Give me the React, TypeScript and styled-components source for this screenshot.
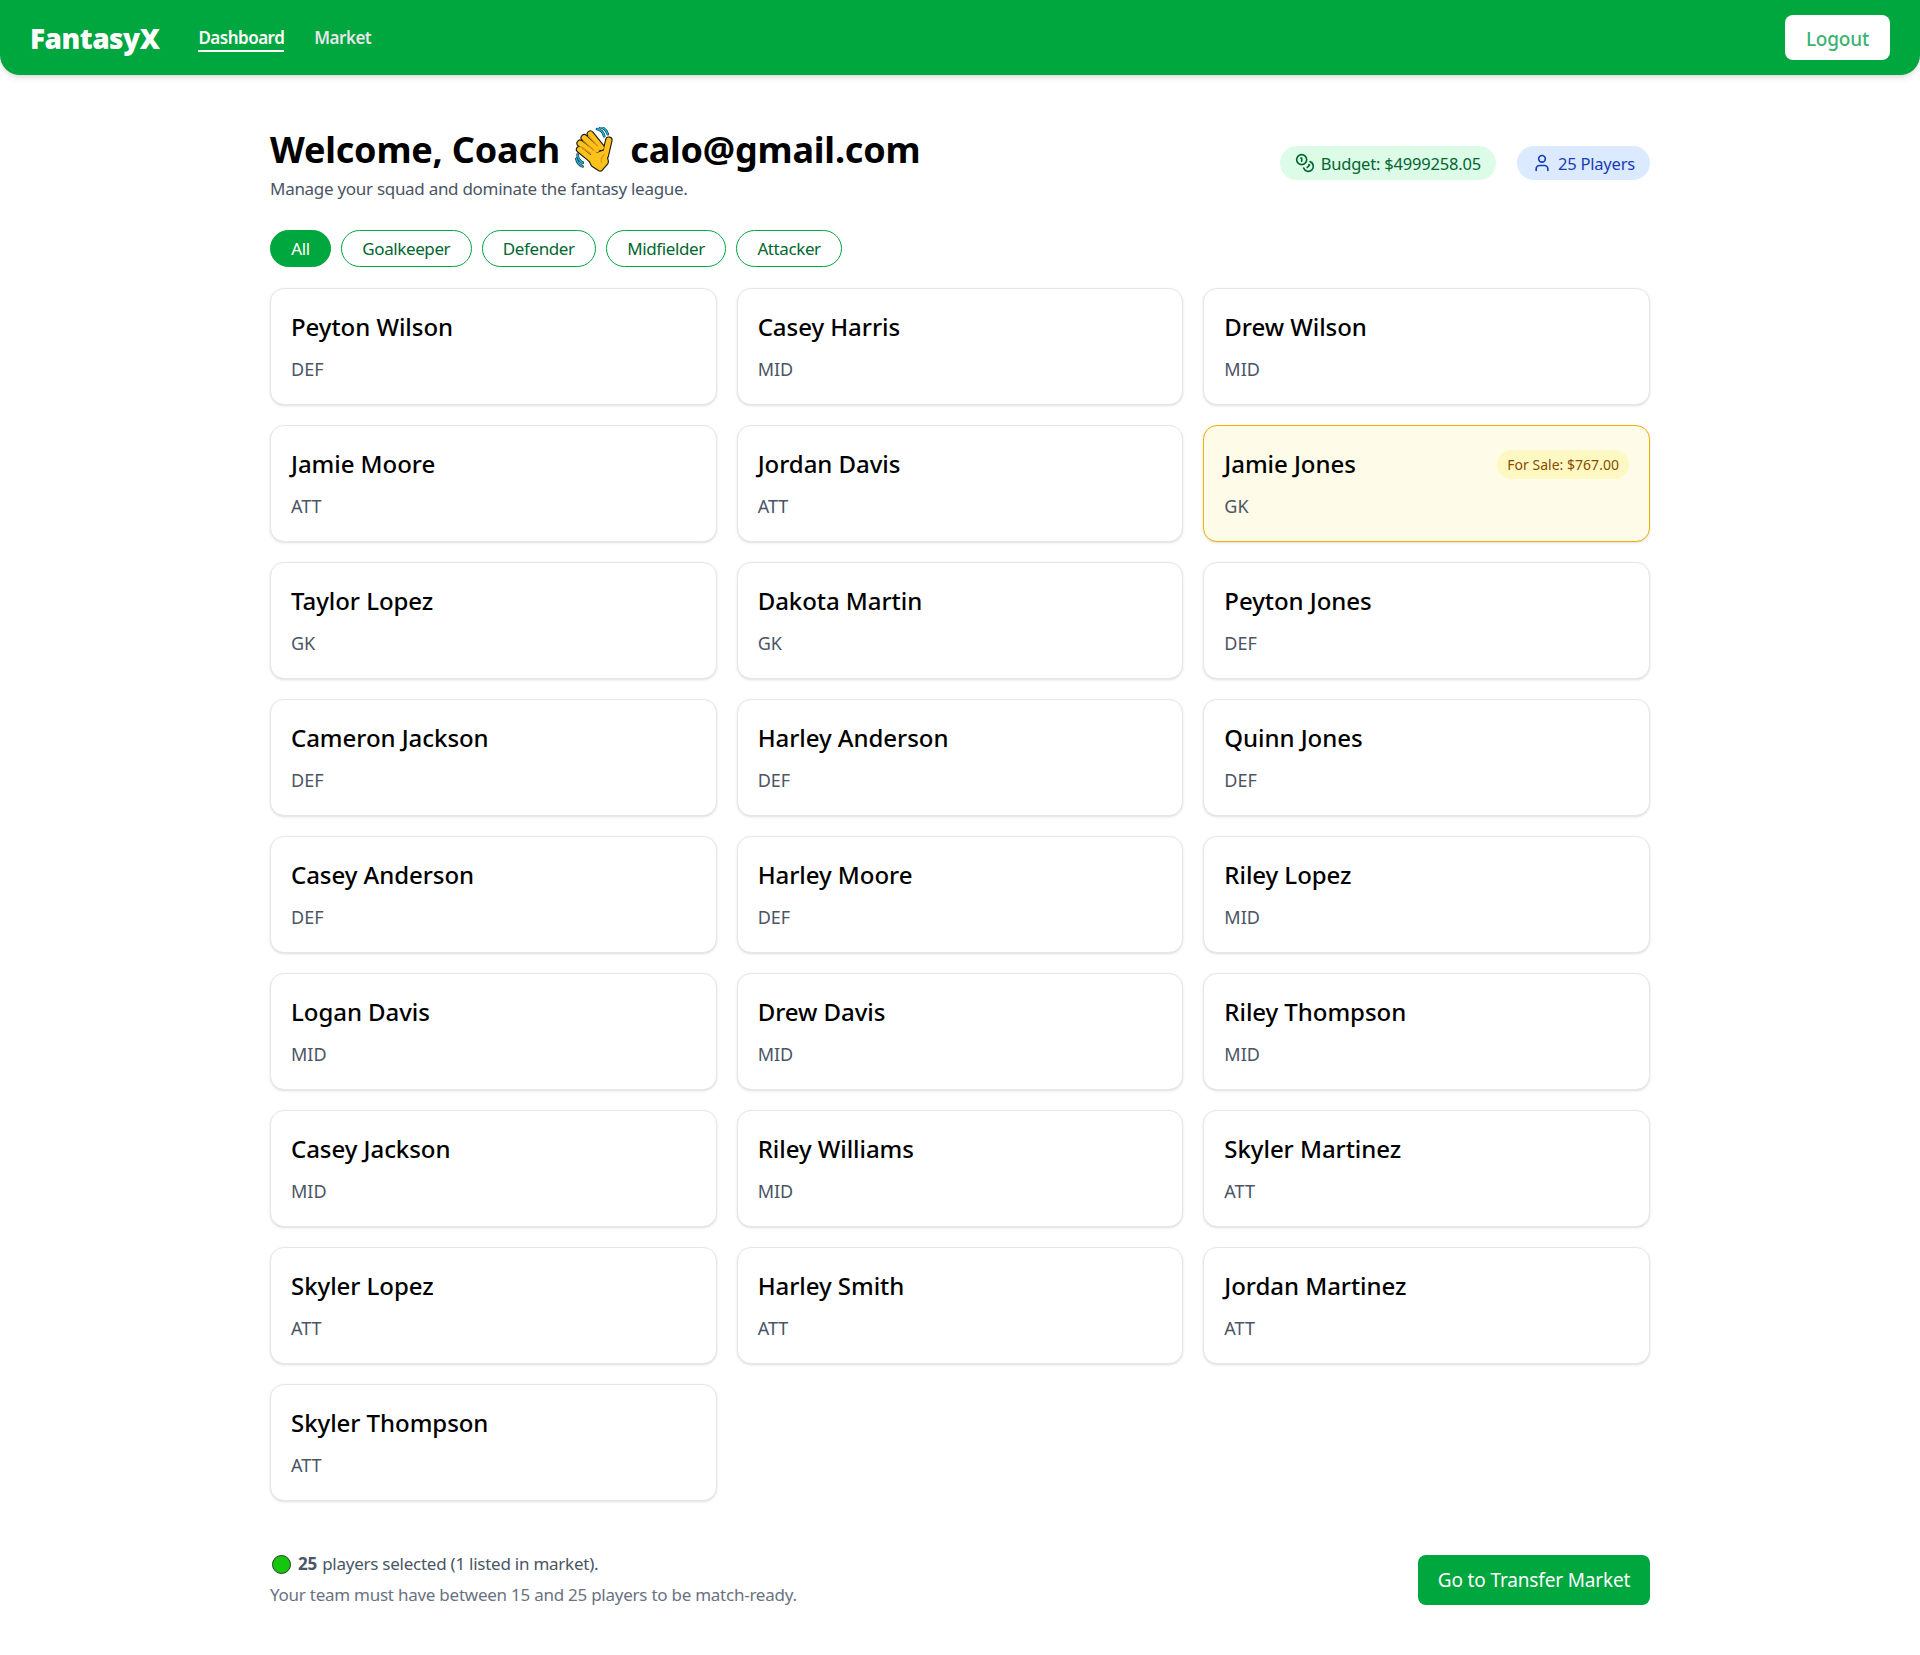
import React from "react";
import styled, { createGlobalStyle } from "styled-components";
import { Coins, User } from "lucide-react";

const FONT = `"Noto Sans", "Open Sans", sans-serif`;

const GlobalStyle = createGlobalStyle`
  * { box-sizing: border-box; }
  body {
    margin: 0;
    background: #fff;
    font-family: ${FONT};
    color: #000;
  }
`;

const players: { name: string; pos: string; price?: string }[] = [
  { name: "Peyton Wilson", pos: "DEF" },
  { name: "Casey Harris", pos: "MID" },
  { name: "Drew Wilson", pos: "MID" },
  { name: "Jamie Moore", pos: "ATT" },
  { name: "Jordan Davis", pos: "ATT" },
  { name: "Jamie Jones", pos: "GK", price: "$767.00" },
  { name: "Taylor Lopez", pos: "GK" },
  { name: "Dakota Martin", pos: "GK" },
  { name: "Peyton Jones", pos: "DEF" },
  { name: "Cameron Jackson", pos: "DEF" },
  { name: "Harley Anderson", pos: "DEF" },
  { name: "Quinn Jones", pos: "DEF" },
  { name: "Casey Anderson", pos: "DEF" },
  { name: "Harley Moore", pos: "DEF" },
  { name: "Riley Lopez", pos: "MID" },
  { name: "Logan Davis", pos: "MID" },
  { name: "Drew Davis", pos: "MID" },
  { name: "Riley Thompson", pos: "MID" },
  { name: "Casey Jackson", pos: "MID" },
  { name: "Riley Williams", pos: "MID" },
  { name: "Skyler Martinez", pos: "ATT" },
  { name: "Skyler Lopez", pos: "ATT" },
  { name: "Harley Smith", pos: "ATT" },
  { name: "Jordan Martinez", pos: "ATT" },
  { name: "Skyler Thompson", pos: "ATT" },
];

const filters = ["All", "Goalkeeper", "Defender", "Midfielder", "Attacker"];

// hand is built from round strokes: dark pass first, yellow pass on top
const HAND = (
  <>
    <path d="M4 22 L15 31" />
    <path d="M4.500 16 L18 26" />
    <path d="M8.500 10.500 L21 22" />
    <path d="M14.500 7 L25 20" />
    <path d="M32.500 13 L29 28" />
    <path d="M15 30 L27 26 L29 34 L24 40 L18 36 Z" />
  </>
);

const WaveEmoji = () => (
  <svg width="40" height="46" viewBox="0 0 38 45" fill="none" strokeLinecap="round" strokeLinejoin="round">
    <path d="M21 2c3 .500 6 3 7 7M24 0c3 .500 6 3 7.500 7" stroke="#12333d" strokeWidth="2.600" />
    <path d="M21 2c3 .500 6 3 7 7M24 0c3 .500 6 3 7.500 7" stroke="#19b5d6" strokeWidth="1.400" />
    <path d="M2 27c0 3 1.500 6 5 8M0.800 31c.500 3 2.500 6 6 7.500" stroke="#12333d" strokeWidth="2.600" />
    <path d="M2 27c0 3 1.500 6 5 8M0.800 31c.500 3 2.500 6 6 7.500" stroke="#19b5d6" strokeWidth="1.400" />
    <g stroke="#1d1a12" strokeWidth="7.400">{HAND}</g>
    <g stroke="#fcc21b" strokeWidth="5.200" fill="#fcc21b">{HAND}</g>
    <path d="M6 19.500 L15 26M7.500 13.500 L17.500 22.500M12.500 9 L21.500 18.500" stroke="#d48c0e" strokeWidth="1" />
    <path d="M28 27c-2.500 2-3.500 4.500-2.800 7.500" stroke="#d48c0e" strokeWidth="1" />
  </svg>
);

const Nav = () => (
  <NavBar>
    <NavLeft>
      <Logo>FantasyX</Logo>
      <NavLink $active>Dashboard</NavLink>
      <NavLink>Market</NavLink>
    </NavLeft>
    <LogoutButton>Logout</LogoutButton>
  </NavBar>
);

const PlayerCard = ({ name, pos, price }: { name: string; pos: string; price?: string }) => (
  <Card $sale={!!price}>
    <CardTop>
      <PlayerName>{name}</PlayerName>
      {price && <SaleTag>For Sale: {price}</SaleTag>}
    </CardTop>
    <Position>{pos}</Position>
  </Card>
);

export default function App() {
  return (
    <>
      <GlobalStyle />
      <Nav />
      <Main>
        <Head>
          <div>
            <Title>
              Welcome, Coach <EmojiWrap><WaveEmoji /></EmojiWrap> calo@gmail.com
            </Title>
            <Subtitle>Manage your squad and dominate the fantasy league.</Subtitle>
          </div>
          <Badges>
            <Badge $tone="green">
              <Coins size={20} strokeWidth={2} />
              Budget: $4999258.05
            </Badge>
            <Badge $tone="blue">
              <User size={20} strokeWidth={2} />
              25 Players
            </Badge>
          </Badges>
        </Head>
        <Filters>
          {filters.map((f, i) => (
            <FilterPill key={f} $active={i === 0}>{f}</FilterPill>
          ))}
        </Filters>
        <Grid>
          {players.map((p) => (
            <PlayerCard key={p.name} {...p} />
          ))}
        </Grid>
        <Footer>
          <div>
            <Count>
              <Dot />
              <strong>25</strong> players selected (1 listed in market).
            </Count>
            <Hint>Your team must have between 15 and 25 players to be match-ready.</Hint>
          </div>
          <MarketButton>Go to Transfer Market</MarketButton>
        </Footer>
      </Main>
    </>
  );
}

const NavBar = styled.header`
  height: 75px;
  background: #00a63e;
  border-radius: 0 0 20px 20px;
  padding: 0 30px;
  display: flex;
  align-items: center;
  justify-content: space-between;
  box-shadow: 0 4px 6px -1px rgba(0, 0, 0, 0.1), 0 2px 4px -2px rgba(0, 0, 0, 0.1);
`;

const NavLeft = styled.div`
  display: flex;
  align-items: center;
  gap: 30px;
`;

const Logo = styled.div`
  color: #fff;
  font-size: 28px;
  font-weight: 900;
  letter-spacing: -0.5px;
  margin-right: 9px;
`;

const NavLink = styled.a<{ $active?: boolean }>`
  color: ${(p) => (p.$active ? "#fff" : "#e5e7eb")};
  font-size: 17px;
  font-weight: 600;
  letter-spacing: -0.5px;
  line-height: 24px;
  padding-top: 2px;
  border-bottom: 2px solid ${(p) => (p.$active ? "#fff" : "transparent")};
`;

const LogoutButton = styled.button`
  width: 105px;
  height: 45px;
  border: 0;
  border-radius: 8px;
  padding: 2px 0 0;
  background: #fff;
  color: #3cb371;
  font-family: ${FONT};
  font-size: 19px;
  font-weight: 500;
  letter-spacing: -0.2px;
`;

const Main = styled.main`
  width: 1380px;
  margin: 0 auto;
  padding-top: 55px;
`;

const Head = styled.div`
  display: flex;
  justify-content: space-between;
  align-items: center;
`;

const Title = styled.h1`
  margin: 0;
  font-size: 36px;
  line-height: 40px;
  font-weight: 700;
  letter-spacing: -0.2px;
  display: flex;
  align-items: center;
  white-space: pre;
`;

const EmojiWrap = styled.span`
  display: inline-flex;
  margin: -3px 6px;
`;

const Subtitle = styled.p`
  margin: 7px 0 0;
  color: #4a5565;
  font-size: 17px;
  line-height: 24px;
  letter-spacing: -0.29px;
`;

const Badges = styled.div`
  display: flex;
  gap: 21px;
  margin-bottom: 5px;
`;

const Badge = styled.div<{ $tone: "green" | "blue" }>`
  display: flex;
  align-items: center;
  gap: 6px;
  height: 34px;
  padding: 0 15px;
  border-radius: 999px;
  font-size: 16.5px;
  letter-spacing: -0.2px;
  background: ${(p) => (p.$tone === "green" ? "#dcfce7" : "#dbeafe")};
  color: ${(p) => (p.$tone === "green" ? "#016630" : "#193cb8")};
`;

const Filters = styled.div`
  display: flex;
  gap: 10px;
  margin-top: 29px;
`;

const FilterPill = styled.button<{ $active?: boolean }>`
  height: 37px;
  padding: 0 20.3px;
  border-radius: 999px;
  border: 1px solid #00a63e;
  background: ${(p) => (p.$active ? "#00a63e" : "#fff")};
  color: ${(p) => (p.$active ? "#fff" : "#016630")};
  font-family: ${FONT};
  font-size: 17px;
  letter-spacing: -0.4px;
`;

const Grid = styled.div`
  display: grid;
  grid-template-columns: repeat(3, 1fr);
  gap: 20px;
  margin-top: 21px;
`;

const Card = styled.div<{ $sale?: boolean }>`
  height: 117px;
  padding: 20px;
  border-radius: 14px;
  border: 1px solid ${(p) => (p.$sale ? "#f0b100" : "#e5e7eb")};
  background: ${(p) => (p.$sale ? "#fefce8" : "#fff")};
  box-shadow: 0 1px 3px 0 rgba(0, 0, 0, 0.1), 0 1px 2px -1px rgba(0, 0, 0, 0.1);
`;

const CardTop = styled.div`
  display: flex;
  align-items: center;
  justify-content: space-between;
  height: 36px;
`;

const PlayerName = styled.div`
  font-size: 24px;
  line-height: 32px;
  font-weight: 500;
  letter-spacing: -0.05px;
`;

const SaleTag = styled.span`
  height: 29px;
  line-height: 29px;
  padding: 0 10px;
  border-radius: 999px;
  background: #fef9c2;
  color: #894b00;
  font-size: 14px;
  letter-spacing: 0.02px;
`;

const Position = styled.div`
  margin-top: 12px;
  color: #4a5565;
  font-size: 18px;
  line-height: 24px;
`;

const Footer = styled.footer`
  display: flex;
  justify-content: space-between;
  align-items: center;
  margin-top: 51px;
  padding-bottom: 47px;
`;

const Count = styled.div`
  display: flex;
  align-items: center;
  white-space: pre-wrap;
  color: #4a5565;
  font-size: 17px;
  line-height: 24px;
  letter-spacing: -0.25px;
  strong {
    font-weight: 700;
    margin-right: 1px;
  }
`;

const Dot = styled.span`
  width: 19px;
  height: 19px;
  margin: 0 7px 0 2px;
  border-radius: 50%;
  background: #16c60c;
  border: 1px solid #1f3d1c;
`;

const Hint = styled.div`
  margin-top: 7px;
  color: #6a7282;
  font-size: 17px;
  line-height: 24px;
  letter-spacing: -0.25px;
`;

const MarketButton = styled.button`
  width: 232px;
  height: 50px;
  border: 0;
  border-radius: 8px;
  background: #00a63e;
  color: #fff;
  font-family: ${FONT};
  font-size: 19px;
  letter-spacing: -0.15px;
`;
